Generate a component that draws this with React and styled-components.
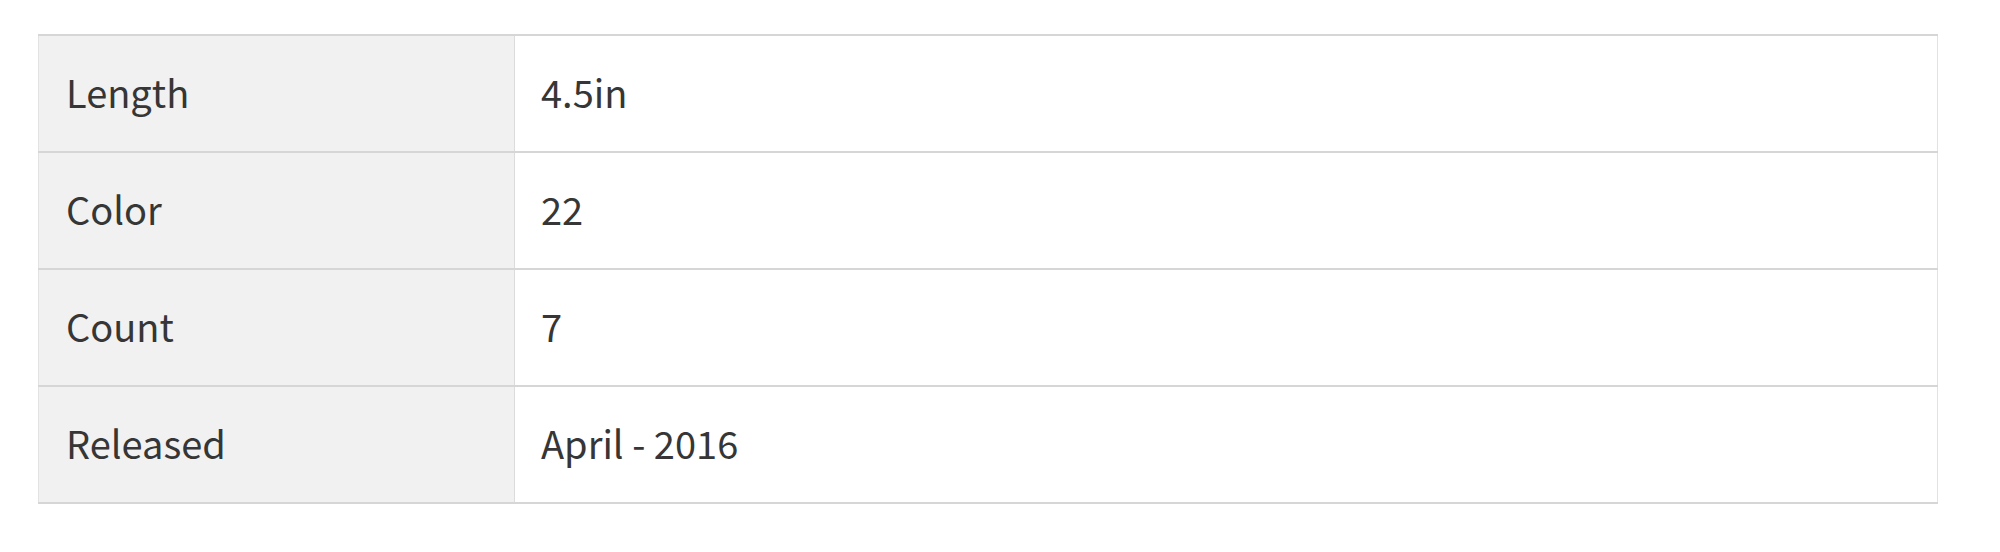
import React from 'react'
import styled, { createGlobalStyle } from 'styled-components'

const specs = [
  { label: 'Length', value: '4.5in' },
  { label: 'Color', value: '22' },
  { label: 'Count', value: '7' },
  { label: 'Released', value: 'April - 2016' },
]

const App = () => {
  return (
    <>
      <GlobalStyle />
      <Page>
        <SpecTable>
          <tbody>
            {specs.map((s) => (
              <SpecRow key={s.label}>
                <SpecLabel>{s.label}</SpecLabel>
                <SpecValue>{s.value}</SpecValue>
              </SpecRow>
            ))}
          </tbody>
        </SpecTable>
      </Page>
    </>
  )
}

const GlobalStyle = createGlobalStyle`
  html, body {
    margin: 0;
    padding: 0;
    background: #fff;
  }
  body {
    font-family: "Noto Sans CJK JP", "Noto Sans", sans-serif;
    color: #333;
  }
`

const Page = styled.div`
  padding: 34px 62px 0 38px;
`

const SpecTable = styled.table`
  width: 1900px;
  border-collapse: collapse;
  border-left: 1px solid #e2e2e2;
  border-right: 1px solid #e2e2e2;
`

const SpecRow = styled.tr`
  border-top: 2px solid #d6d6d6;
  border-bottom: 2px solid #d6d6d6;
`

const cell = `
  height: 111px;
  padding: 0 0 4px 27px;
  font-size: 38px;
  font-weight: 400;
  line-height: 1;
  text-align: left;
  vertical-align: middle;
  color: #363636;
`

const SpecLabel = styled.th`
  ${cell}
  width: 448px;
  background: #f1f1f1;
  border-right: 1px solid #dcdcdc;
`

const SpecValue = styled.td`
  ${cell}
  padding-left: 26px;
  background: #fff;
`

export default App
